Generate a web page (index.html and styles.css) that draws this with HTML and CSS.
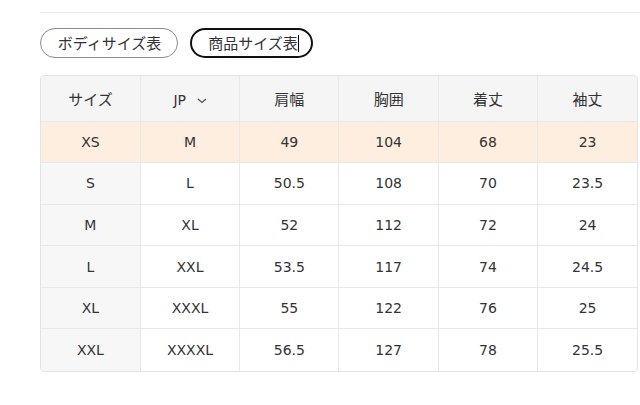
FILE: index.html
```html
<!DOCTYPE html>
<html lang="ja">
<head>
<meta charset="utf-8">
<link rel="stylesheet" href="styles.css">
</head>
<body>
<div class="page">
  <div class="rule"></div>
  <div class="tabs">
    <button class="tab">ボディサイズ表</button>
    <button class="tab active">商品サイズ表<span class="caret"></span></button>
  </div>
  <div class="table-wrap">
    <table class="size-table">
      <thead>
        <tr>
          <th>サイズ</th>
          <th><span class="jp">JP <svg class="chev" width="10" height="6" viewBox="0 0 10 6"><path d="M1 1 L5 4.5 L9 1" fill="none" stroke="#555" stroke-width="1.3"/></svg></span></th>
          <th>肩幅</th>
          <th>胸囲</th>
          <th>着丈</th>
          <th>袖丈</th>
        </tr>
      </thead>
      <tbody>
        <tr class="hl"><td>XS</td><td>M</td><td>49</td><td>104</td><td>68</td><td>23</td></tr>
        <tr><td>S</td><td>L</td><td>50.5</td><td>108</td><td>70</td><td>23.5</td></tr>
        <tr><td>M</td><td>XL</td><td>52</td><td>112</td><td>72</td><td>24</td></tr>
        <tr><td>L</td><td>XXL</td><td>53.5</td><td>117</td><td>74</td><td>24.5</td></tr>
        <tr><td>XL</td><td>XXXL</td><td>55</td><td>122</td><td>76</td><td>25</td></tr>
        <tr><td>XXL</td><td>XXXXL</td><td>56.5</td><td>127</td><td>78</td><td>25.5</td></tr>
      </tbody>
    </table>
  </div>
</div>
</body>
</html>
```

FILE: styles.css
```css
* { box-sizing: border-box; }
html, body { margin: 0; padding: 0; background: #fff; }
body {
  font-family: "DejaVu Sans", "Noto Sans CJK JP", sans-serif;
  color: #333;
  font-size: 14px;
}
.page {
  padding: 12px 0 0 40px;
  width: 640px;
}
.rule {
  height: 1px;
  background: #e8e8e8;
}
.tabs {
  display: flex;
  gap: 12px;
  margin-top: 15px;
}
.tab {
  font-family: "Noto Sans CJK JP", sans-serif;
  font-size: 15px;
  color: #333;
  background: #fff;
  height: 30px;
  border: 1px solid #8a8a8a;
  border-radius: 15px;
  padding: 0 14px 0 15px;
  width: 138px;
  line-height: 28px;
}
.tab.active {
  border: 2px solid #111;
  width: 123px;
  padding: 0 10px 0 14px;
  line-height: 26px;
}
.caret {
  display: inline-block;
  width: 1px;
  height: 17px;
  background: #000;
  vertical-align: -3px;
}
.table-wrap {
  margin-top: 17px;
  width: 598px;
  border: 1px solid #e3e3e3;
  border-radius: 4px;
  overflow: hidden;
}
.size-table {
  width: 100%;
  border-collapse: collapse;
  table-layout: fixed;
}
.size-table th,
.size-table td {
  text-align: center;
  border-left: 1px solid #e8e8e8;
  border-top: 1px solid #e8e8e8;
  padding: 0;
}
.size-table tr > :first-child { border-left: none; }
.size-table thead th { border-top: none; }
.size-table th {
  height: 45px;
  background: #f5f5f5;
  font-weight: normal;
  font-family: "Noto Sans CJK JP", sans-serif;
  font-size: 15px;
}
.size-table th .jp { font-family: "DejaVu Sans", sans-serif; font-size: 14px; }
.chev { margin-left: 6px; vertical-align: 1px; }
.size-table td { height: 41.6px; }
.size-table td:first-child { background: #f7f7f7; }
.size-table tr.hl td { background: #fdeee0; }
```
